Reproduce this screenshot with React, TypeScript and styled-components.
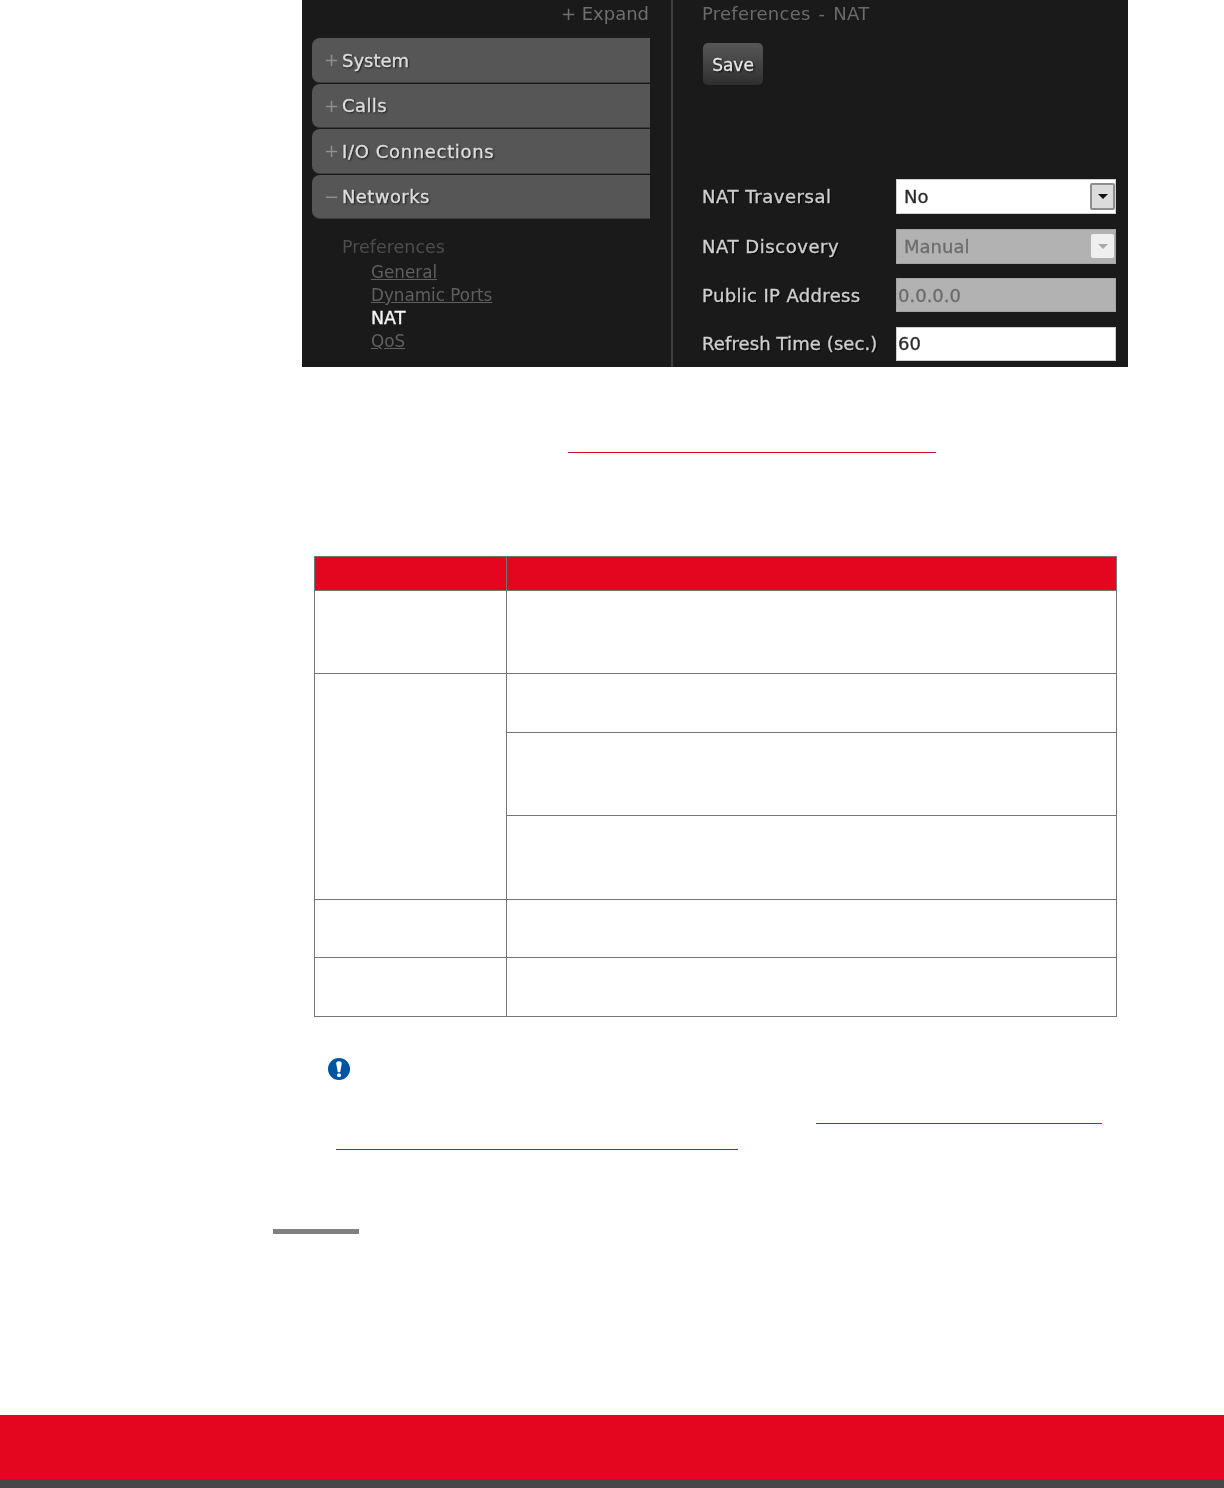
import React from "react";
import styled, { createGlobalStyle } from "styled-components";

const Global = createGlobalStyle`
  html, body { margin: 0; padding: 0; background: #fff; }
  #root { width: 1224px; }
`;

const Page = styled.div`
  display: flex;
  flex-direction: column;
  width: 1224px;
  height: 1488px;
  overflow: hidden;
  background: #fff;
  font-family: "DejaVu Sans", sans-serif;
`;

const Shot = styled.div`
  display: grid;
  grid-template-columns: 369px 3px 1fr;
  width: 826px;
  height: 367px;
  margin-left: 302px;
  background: #1a1a1a;
  overflow: hidden;
  flex: none;
`;

const Sidebar = styled.div`
  display: flex;
  flex-direction: column;
  padding: 0 21px 0 10px;
  filter: blur(0.5px);
`;

const Expand = styled.div`
  height: 38px;
  padding: 0 1px 0 0;
  box-sizing: border-box;
  text-align: right;
  font-size: 18px;
  line-height: 27px;
  color: #6f6f6f;
`;

const NavList = styled.div`
  display: flex;
  flex-direction: column;
  gap: 1px;
`;

const NavItem = styled.div<{ $spacing: number }>`
  display: flex;
  align-items: center;
  height: 44.5px;
  box-sizing: border-box;
  padding: 1px 0 0 12px;
  background: #565656;
  border-bottom: 1px solid #3c3c3c;
  border-radius: 8px 0 0 8px;
  font-size: 18px;
  letter-spacing: ${(p) => p.$spacing}px;
  color: #dedede;
  -webkit-text-stroke: 0.35px #dedede;
  text-shadow: 1px 1px 2px #111;
`;

const NavSign = styled.span`
  width: 18px;
  flex: none;
  margin-top: -1px;
  font-size: 18px;
  letter-spacing: 0;
  color: #8e8e8e;
  -webkit-text-stroke: 0;
  text-shadow: none;
`;

const SubNav = styled.div`
  display: flex;
  flex-direction: column;
  padding: 16.5px 0 0 30px;
  font-size: 17.5px;
  line-height: 23.3px;
`;

const SubTitle = styled.div`
  color: #4d4d4d;
  height: 25px;
`;

const SubLink = styled.div<{ $active?: boolean }>`
  margin-left: 29px;
  font-size: ${(p) => (p.$active ? 17.5 : 16.8)}px;
  color: ${(p) => (p.$active ? "#f4f4f4" : "#5f5f5f")};
  text-decoration: ${(p) => (p.$active ? "none" : "underline")};
  -webkit-text-stroke: ${(p) => (p.$active ? "0.35px #f4f4f4" : "0")};
`;

const Divider = styled.div`
  background: #3f3f3f;
  width: 2px;
`;

const Main = styled.div`
  display: flex;
  flex-direction: column;
  padding-left: 28px;
  filter: blur(0.5px);
`;

const PanelTitle = styled.div`
  height: 43px;
  box-sizing: border-box;
  font-size: 18px;
  line-height: 27px;
  letter-spacing: 0.25px;
  word-spacing: 2px;
  color: #6a6a6a;
`;

const SaveButton = styled.div`
  display: flex;
  align-items: center;
  justify-content: center;
  width: 60px;
  height: 42px;
  box-sizing: border-box;
  padding-top: 2px;
  margin-left: 1px;
  border-radius: 5px;
  background: linear-gradient(#575757, #2f2f2f);
  color: #e8e8e8;
  font-size: 17px;
  -webkit-text-stroke: 0.3px #e8e8e8;
  text-shadow: 1px 1px 2px #000;
`;

const Form = styled.div`
  display: grid;
  grid-template-columns: 194px 220px;
  grid-auto-rows: auto;
  row-gap: 14.5px;
  align-items: center;
  margin-top: 94px;
`;

const Label = styled.div<{ $spacing: number }>`
  font-size: 18px;
  letter-spacing: ${(p) => p.$spacing}px;
  color: #cfcfcf;
  white-space: nowrap;
  -webkit-text-stroke: 0.35px #cfcfcf;
  text-shadow: 1px 1px 1px #000;
`;

const Field = styled.div<{ $disabled?: boolean; $select?: boolean }>`
  display: flex;
  align-items: center;
  justify-content: space-between;
  height: ${(p) => (p.$select ? 35 : 34)}px;
  box-sizing: border-box;
  padding: 0 1px 0 ${(p) => (p.$select ? 8 : 2)}px;
  font-size: 18px;
  background: ${(p) => (p.$disabled ? "#b2b2b2" : "#fff")};
  color: ${(p) => (p.$disabled ? "#6c6c6c" : "#2a2a2a")};
  -webkit-text-stroke: 0.3px currentColor;
  box-shadow: inset 0 0 0 1px ${(p) => (p.$disabled ? "#a4a4a4" : "#cfcfcf")};
`;

const Arrow = styled.div<{ $disabled?: boolean }>`
  display: flex;
  align-items: center;
  justify-content: center;
  width: ${(p) => (p.$disabled ? 23 : 25)}px;
  height: ${(p) => (p.$disabled ? 24 : 27)}px;
  margin-right: ${(p) => (p.$disabled ? 1 : 0)}px;
  box-sizing: border-box;
  background: ${(p) => (p.$disabled ? "#efefef" : "#dcdcdc")};
  border: ${(p) => (p.$disabled ? "none" : "2px solid #8d8d8d")};
  border-radius: 2px;
`;

const Caret = styled.div<{ $disabled?: boolean }>`
  width: 0;
  height: 0;
  border-left: 5px solid transparent;
  border-right: 5px solid transparent;
  border-top: 5px solid ${(p) => (p.$disabled ? "#a8a8a8" : "#111")};
`;

const RefLine = styled.div<{ $left: number; $width: number; $top: number; $dark?: boolean }>`
  flex: none;
  height: 1px;
  margin-top: ${(p) => p.$top}px;
  margin-left: ${(p) => p.$left}px;
  width: ${(p) => p.$width}px;
  background: ${(p) => (p.$dark ? "#c8102e" : "#e4061f")};
`;

const Table = styled.table`
  flex: none;
  width: 803px;
  margin: 103px 0 0 314px;
  border-collapse: collapse;
  table-layout: fixed;
`;

const HeadCell = styled.th`
  height: 33px;
  padding: 0;
  background: #e4061f;
  border: 1px solid #757575;
`;

const Cell = styled.td<{ $h?: number }>`
  height: ${(p) => p.$h ?? 0}px;
  padding: 0;
  border: 1px solid #757575;
`;

const Note = styled.div`
  display: flex;
  flex-direction: column;
  flex: none;
  margin-top: 41px;
`;

const NoteIcon = styled.svg`
  display: block;
  width: 22px;
  height: 22px;
  margin-left: 328px;
`;

const Rule = styled.div`
  flex: none;
  width: 86px;
  height: 5px;
  margin: 79px 0 0 273px;
  background: #808080;
`;

const Footer = styled.div`
  margin-top: auto;
  flex: none;
`;

const FooterRed = styled.div`
  height: 64px;
  background: #e4061f;
`;

const FooterDark = styled.div`
  height: 9px;
  background: #474747;
`;

const navItems = [
  { sign: "+", label: "System", spacing: 0 },
  { sign: "+", label: "Calls", spacing: 0.4 },
  { sign: "+", label: "I/O Connections", spacing: 0.65 },
  { sign: "−", label: "Networks", spacing: 0.4 },
];

export default function App() {
  return (
    <Page>
      <Global />
      <Shot>
        <Sidebar>
          <Expand>+ Expand</Expand>
          <NavList>
            {navItems.map((n) => (
              <NavItem key={n.label} $spacing={n.spacing}>
                <NavSign>{n.sign}</NavSign>
                {n.label}
              </NavItem>
            ))}
          </NavList>
          <SubNav>
            <SubTitle>Preferences</SubTitle>
            <SubLink>General</SubLink>
            <SubLink>Dynamic Ports</SubLink>
            <SubLink $active>NAT</SubLink>
            <SubLink>QoS</SubLink>
          </SubNav>
        </Sidebar>
        <Divider />
        <Main>
          <PanelTitle>Preferences - NAT</PanelTitle>
          <SaveButton>Save</SaveButton>
          <Form>
            <Label $spacing={0.55}>NAT Traversal</Label>
            <Field $select>
              No
              <Arrow>
                <Caret />
              </Arrow>
            </Field>
            <Label $spacing={0.55}>NAT Discovery</Label>
            <Field $select $disabled>
              Manual
              <Arrow $disabled>
                <Caret $disabled />
              </Arrow>
            </Field>
            <Label $spacing={0.35}>Public IP Address</Label>
            <Field $disabled>0.0.0.0</Field>
            <Label $spacing={0.1}>Refresh Time (sec.)</Label>
            <Field>60</Field>
          </Form>
        </Main>
      </Shot>

      <RefLine $top={85} $left={568} $width={368} $dark />

      <Table>
        <colgroup>
          <col style={{ width: 192 }} />
          <col />
        </colgroup>
        <thead>
          <tr>
            <HeadCell />
            <HeadCell />
          </tr>
        </thead>
        <tbody>
          <tr>
            <Cell $h={82} />
            <Cell $h={82} />
          </tr>
          <tr>
            <Cell rowSpan={3} />
            <Cell $h={58} />
          </tr>
          <tr>
            <Cell $h={82} />
          </tr>
          <tr>
            <Cell $h={83} />
          </tr>
          <tr>
            <Cell $h={57} />
            <Cell $h={57} />
          </tr>
          <tr>
            <Cell $h={58} />
            <Cell $h={58} />
          </tr>
        </tbody>
      </Table>

      <Note>
        <NoteIcon viewBox="0 0 22 22">
          <circle cx="11" cy="11" r="11" fill="#0054a6" />
          <path d="M8.2 5.4c0-1.4 1.2-2.2 2.8-2.2s2.8.8 2.8 2.2L12.4 13.2c-.1.6-.6 1-1.4 1s-1.3-.4-1.4-1z" fill="#fff" />
          <circle cx="11" cy="17.2" r="2" fill="#fff" />
        </NoteIcon>
        <RefLine $top={43} $left={816} $width={286} />
        <RefLine $top={25} $left={336} $width={402} $dark />
      </Note>

      <Rule />

      <Footer>
        <FooterRed />
        <FooterDark />
      </Footer>
    </Page>
  );
}
